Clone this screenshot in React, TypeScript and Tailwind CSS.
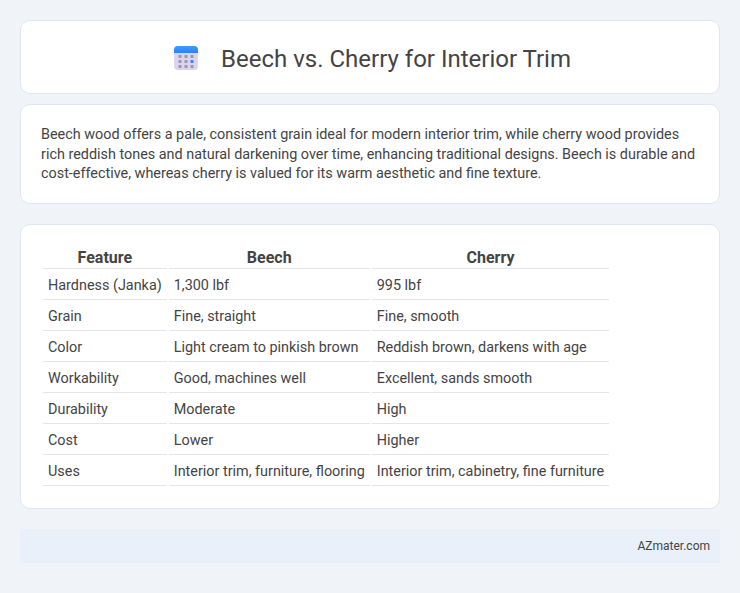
export default function App() {
  const rows = [
    ["Hardness (Janka)", "1,300 lbf", "995 lbf"],
    ["Grain", "Fine, straight", "Fine, smooth"],
    ["Color", "Light cream to pinkish brown", "Reddish brown, darkens with age"],
    ["Workability", "Good, machines well", "Excellent, sands smooth"],
    ["Durability", "Moderate", "High"],
    ["Cost", "Lower", "Higher"],
    ["Uses", "Interior trim, furniture, flooring", "Interior trim, cabinetry, fine furniture"],
  ];
  return (
    <div className="min-h-[593px] bg-[#f0f4f9] px-5 pt-5 pb-[30px] font-['Roboto',sans-serif] text-[#444]">
      <div className="flex h-[74px] items-center justify-center gap-[22px] rounded-[10px] border border-[#e0e6ef] bg-white pl-[4px]">
        <svg width="26" height="26" viewBox="0 0 26 26">
          <defs>
            <linearGradient id="top" x1="0" y1="0" x2="0" y2="1">
              <stop offset="0" stopColor="#3f9bff" />
              <stop offset="1" stopColor="#2f80f5" />
            </linearGradient>
          </defs>
          <rect x="1" y="2" width="24" height="24" rx="4" fill="#dcd3ee" />
          <path d="M1 9V6a4 4 0 0 1 4-4h16a4 4 0 0 1 4 4v3z" fill="url(#top)" />
          {[5.5, 11.5, 17.5].map((x) =>
            [11, 16, 21].map((y) => (
              <rect key={`${x}-${y}`} x={x} y={y} width="3" height="3" rx="0.6" fill={x === 17.5 && y === 16 ? "#2f8cff" : "#9c97ab"} />
            ))
          )}
        </svg>
        <h1 className="relative top-[2px] text-[24px] font-normal leading-[32px] text-[#444]">Beech vs. Cherry for Interior Trim</h1>
      </div>
      <div className="mt-[10px] h-[100px] rounded-[10px] border border-[#e0e6ef] bg-white px-[20px] py-[20px] text-[14.4px] leading-[19.5px]">
        Beech wood offers a pale, consistent grain ideal for modern interior trim, while cherry wood provides rich reddish tones and natural darkening over time, enhancing traditional designs. Beech is durable and cost-effective, whereas cherry is valued for its warm aesthetic and fine texture.
      </div>
      <div className="mt-5 h-[285px] rounded-[10px] border border-[#e0e6ef] bg-white px-[20px] pt-[20px]">
        <table className="border-separate border-spacing-[2px] text-[14.4px] leading-[18px]">
          <thead>
            <tr>
              {["Feature", "Beech", "Cherry"].map((h) => (
                <th key={h} className="border-b border-[#e5e5e5] px-[5px] pt-[2px] pb-[1px] text-center text-[16px] font-bold">{h}</th>
              ))}
            </tr>
          </thead>
          <tbody>
            {rows.map((r) => (
              <tr key={r[0]}>
                {r.map((c) => (
                  <td key={c} className="border-b border-[#e5e5e5] px-[5px] pt-[6px] pb-[4px] text-left">{c}</td>
                ))}
              </tr>
            ))}
          </tbody>
        </table>
      </div>
      <div className="mt-5 flex h-[34px] items-center justify-end bg-[#e9f0f9] px-[10px] text-[12px]">AZmater.com</div>
    </div>
  );
}
